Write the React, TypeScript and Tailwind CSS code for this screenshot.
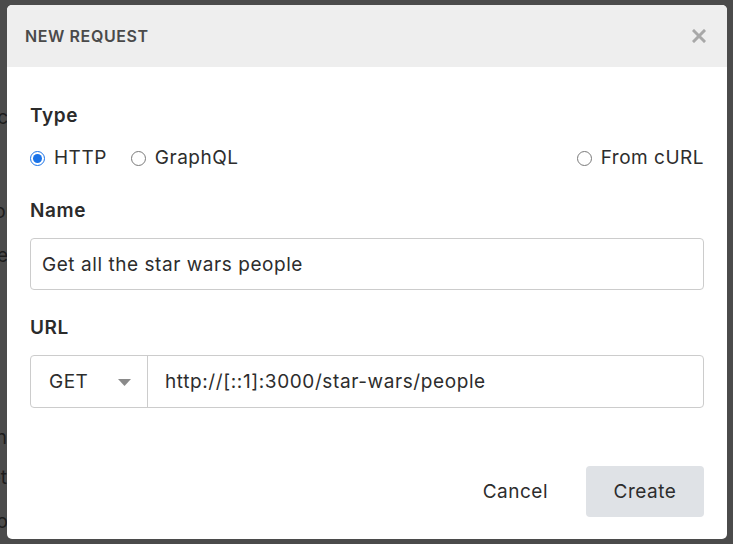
import React, { useState } from 'react';

// bits of the page behind the overlay; only the left edge peeks out
const bgLines = [
  { cls: 'mt-[106px] w-[8px]', text: 'Desc' },
  { cls: 'mt-[70px] w-[17px]', text: 'Action' },
  { cls: 'mt-[20px] w-[8px]', text: 'Inde' },
  { cls: 'mt-[158px] w-[7px]', text: 'Fun' },
  { cls: 'mt-[16px] w-[7px]', text: 'Get' },
  { cls: 'mt-[20px] w-[8px]', text: 'Sto' },
];

function Radio({ checked, label, onClick }: { checked: boolean; label: string; onClick: () => void }) {
  return (
    <button type="button" onClick={onClick} className="flex items-center gap-[9px] text-[19px] tracking-[0.5px] text-[#2d2d2d]">
      {checked ? (
        <span className="flex h-[15px] w-[15px] items-center justify-center rounded-full border-[1.5px] border-[#1a73e8]">
          <span className="h-[9px] w-[9px] rounded-full bg-[#1a73e8]" />
        </span>
      ) : (
        <span className="h-[15px] w-[15px] rounded-full border border-[#7a7a7a] bg-white" />
      )}
      <span>{label}</span>
    </button>
  );
}

export default function App() {
  const [type, setType] = useState('http');
  const [name, setName] = useState('Get all the star wars people');
  const [url, setUrl] = useState('http://[::1]:3000/star-wars/people');

  return (
    <div className="relative h-[544px] w-[733px] overflow-hidden bg-[#4b4b4b] font-['Inter',sans-serif]">
      <div className="flex flex-col text-[19px] leading-[24px] text-[#1c1c1c]">
        {bgLines.map((l) => (
          <div key={l.text} className={`${l.cls} flex justify-end overflow-hidden whitespace-nowrap`}>
            {l.text}
          </div>
        ))}
      </div>

      <div className="absolute left-[7px] top-[5px] flex h-[534px] w-[720px] flex-col overflow-hidden rounded-[5px] bg-white">
        <div className="flex h-[62px] items-center justify-between bg-[#eeeeee] pl-[18px] pr-[21px]">
          <h1 className="text-[16px] font-semibold tracking-[0.6px] text-[#4a4a4a]">NEW REQUEST</h1>
          <button type="button" aria-label="Close">
            <svg width="14" height="14" viewBox="0 0 14 14">
              <path d="M2 2L12 12M12 2L2 12" stroke="#a8a8a8" strokeWidth="3" strokeLinecap="square" />
            </svg>
          </button>
        </div>

        <div className="flex flex-1 flex-col px-[23px] pt-[37px] tracking-[0.5px]">
          <label className="text-[19px] font-semibold leading-[24px] tracking-[0.6px] text-[#2b2b2b]">Type</label>
          <div className="mt-[18px] flex h-[24px] items-center gap-[24px]">
            <Radio checked={type === 'http'} label="HTTP" onClick={() => setType('http')} />
            <Radio checked={type === 'graphql'} label="GraphQL" onClick={() => setType('graphql')} />
            <div className="ml-auto">
              <Radio checked={type === 'curl'} label="From cURL" onClick={() => setType('curl')} />
            </div>
          </div>

          <label className="mt-[29px] text-[19px] font-semibold leading-[24px] tracking-[0.6px] text-[#2b2b2b]">Name</label>
          <input
            value={name}
            onChange={(e) => setName(e.target.value)}
            className="mt-[15px] h-[52px] w-full rounded-[4px] border border-[#cccccc] px-[11px] pt-[1px] text-[19px] tracking-[0.55px] text-[#2d2d2d] outline-none"
          />

          <label className="mt-[26px] text-[19px] font-semibold leading-[24px] tracking-[0.6px] text-[#2b2b2b]">URL</label>
          <div className="mt-[15px] flex h-[53px] w-full rounded-[4px] border border-[#cccccc]">
            <div className="flex w-[117px] items-center justify-between border-r border-[#cccccc] pl-[18px] pr-[16px] pt-[1px] text-[19px] text-[#2d2d2d]">
              <span>GET</span>
              <svg width="13" height="7" viewBox="0 0 13 7">
                <path d="M0 0H13L6.5 7Z" fill="#8a8a8a" />
              </svg>
            </div>
            <input
              value={url}
              onChange={(e) => setUrl(e.target.value)}
              className="min-w-0 flex-1 px-[17px] pt-[1px] text-[19px] tracking-[0.6px] text-[#2d2d2d] outline-none"
            />
          </div>

          <div className="mt-[58px] flex items-center justify-end gap-[38px]">
            <button type="button" className="pt-[1px] text-[19px] text-[#2d2d2d]">Cancel</button>
            <button type="button" className="h-[51px] w-[118px] rounded-[4px] bg-[#dfe2e6] pt-[1px] text-[19px] text-[#2d2d2d]">
              Create
            </button>
          </div>
        </div>
      </div>
    </div>
  );
}
